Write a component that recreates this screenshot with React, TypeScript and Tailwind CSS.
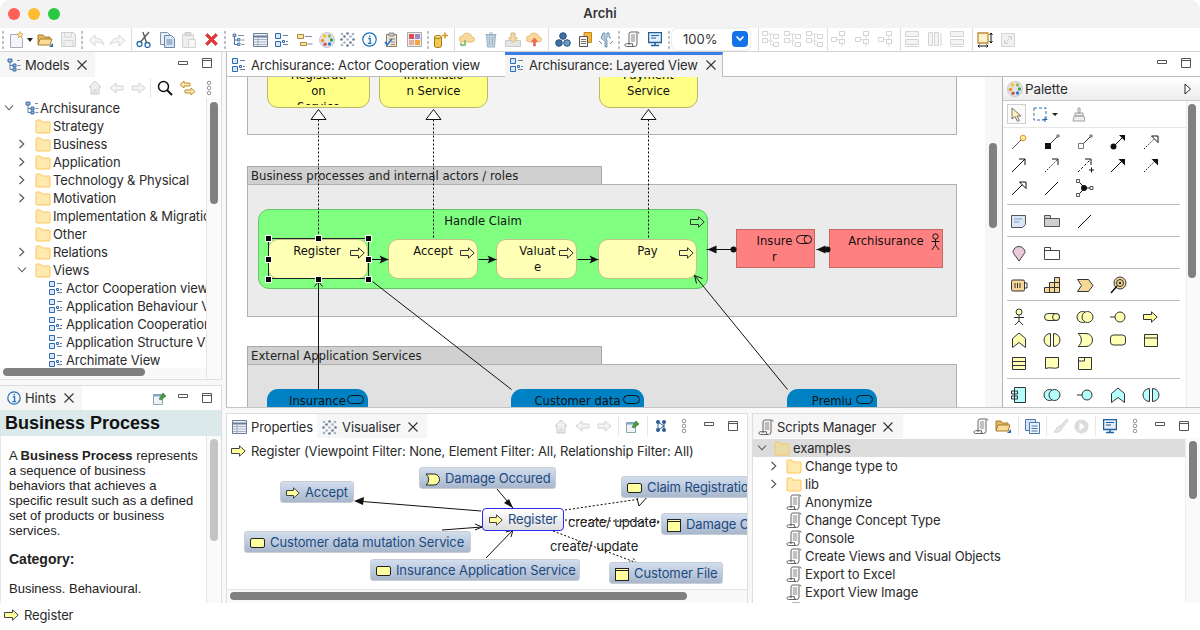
import type { ReactNode } from "react";

const ui = "font-['Inter',sans-serif]";
const dj = "font-['DejaVu_Sans',sans-serif]";

type IconProps = { className?: string; fill?: string; stroke?: string };

const S = ({ w = 16, h = 16, children, className = "" }: { w?: number; h?: number; children: ReactNode; className?: string }) => (
  <svg width={w} height={h} viewBox={`0 0 ${w} ${h}`} fill="none" className={`shrink-0 ${className}`}>
    {children}
  </svg>
);

const Folder = ({ dim = false }: { dim?: boolean }) => (
  <S w={16} h={15}>
    <path d="M1 3.5V2a1 1 0 0 1 1-1h3.5l1.5 2h7a1 1 0 0 1 1 1v9a1 1 0 0 1-1 1H2a1 1 0 0 1-1-1z" fill={dim ? "#eadba8" : "#ffe9ae"} stroke="#fbc65d" />
  </S>
);

const ProcessArrow = ({ fill = "#ffff9e", stroke = "#333", w = 15 }: { fill?: string; stroke?: string; w?: number }) => (
  <S w={w} h={12}>
    <path d={`M.5 3.5H${w - 6.5}V.8L${w - 0.8} 6 ${w - 6.5} 11.2V8.5H.5z`} fill={fill} stroke={stroke} />
  </S>
);

const ModelTree = () => (
  <S w={14} h={14}>
    <path d="M3 3v8.5h3M3 7.5h3" stroke="#5d7ea8" />
    <path d="M1 1h4v3H1zM6 6h3v3H6zM6 10h3v3H6z" fill="#8db4e0" stroke="#3f6ea6" />
    <path d="M10 2.5h3M10.5 7.5h3M10.5 11.5h3" stroke="#7b8ea6" />
  </S>
);

const ViewIcon = () => (
  <S w={14} h={14}>
    <path d="M.5.5h5v5h-5zM.5 8.5h5v5h-5z" fill="#d8e8fa" stroke="#2d6cb5" />
    <path d="M7.5 7.5h2v2h-2z" fill="#d8e8fa" stroke="#2d6cb5" />
    <path d="M8 2.5h5M8 11.5h5M11 8.5h2" stroke="#6b7f96" />
  </S>
);

const ScriptIcon = ({ className = "" }: { className?: string }) => (
  <S w={16} h={17} className={className}>
    <path d="M5 14V3a2 2 0 0 1 2-2h6.5a1.5 1.5 0 0 1 1.5 1.5M13 1.5V13a2.5 2.5 0 0 1-2.5 2.5H2.5A1.5 1.5 0 0 1 1 14c0-.8.7-1.3 1.5-1.3H8.5V14a1.5 1.5 0 0 0 1.5 1.5" stroke="#555" strokeWidth=".9" />
    <path d="M6.8 4h4.5M6.8 6h4.5M6.8 8h4.5M6.8 10h4.5" stroke="#777" strokeWidth=".9" />
  </S>
);

const ChevRight = () => (
  <S w={8} h={10}>
    <path d="M1.5 1 5.8 5l-4.3 4" stroke="#555" strokeWidth="1.1" />
  </S>
);

const ChevDown = () => (
  <S w={10} h={8}>
    <path d="M1 1.5 5 5.8l4-4.3" stroke="#555" strokeWidth="1.1" />
  </S>
);

const Close = () => (
  <S w={12} h={12}>
    <path d="M1.5 1.5l9 9M10.5 1.5l-9 9" stroke="#333" strokeWidth="1.1" />
  </S>
);

const Minimize = () => (
  <S w={10} h={5}>
    <path d="M.5.5h9v3h-9z" stroke="#555" />
  </S>
);

const Maximize = () => (
  <S w={10} h={10}>
    <path d="M.5.5h9v9h-9zM.5 2.5h9" stroke="#555" />
  </S>
);

const ViewMenu = () => (
  <S w={6} h={16}>
    <circle cx="3" cy="3" r="1.8" stroke="#8a8a8a" strokeWidth=".9" />
    <circle cx="3" cy="8" r="1.8" stroke="#8a8a8a" strokeWidth=".9" />
    <circle cx="3" cy="13" r="1.8" stroke="#8a8a8a" strokeWidth=".9" />
  </S>
);

const Home = () => (
  <S w={14} h={15}>
    <path d="M7 1 1 7h2v7h8V7h2zM6 14v-4h2v4" fill="#eee" stroke="#ccc" />
  </S>
);

const NavArrow = ({ left }: { left?: boolean }) => (
  <S w={15} h={12} className={left ? "rotate-180" : ""}>
    <path d="M1 4h7V1l6 5-6 5V8H1z" fill="#f4f4f4" stroke="#d2d2d2" />
  </S>
);

const Pin = () => (
  <S w={14} h={14}>
    <path d="M.5 3.5h9v10h-9z" fill="#eef3f9" stroke="#8aa" />
    <path d="M.5 3.5h9v2h-9z" fill="#7da5cf" />
    <path d="M6 8l4-6 3 3-5 4z" fill="#4d9b3f" stroke="#2f7a2b" strokeWidth=".6" />
  </S>
);

const Grip = () => (
  <div className="flex w-[5px] shrink-0 flex-col items-center gap-[2px]">
    {[0, 1, 2, 3].map((i) => (
      <span key={i} className="h-[3px] w-[2px] bg-[#c4c4c4]" />
    ))}
  </div>
);

const Sep = () => <span className="h-[23px] w-px shrink-0 bg-[#dcdcdc]" />;

// toolbar glyphs
const T = {
  newDoc: (
    <div className="flex items-center">
      <S w={16} h={18}>
        <path d="M1.5 3.5h8l4 4v9h-12z" fill="#f2f4f8" stroke="#aab" />
        <path d="M11 .5l1 2 2 .5-1.5 1.5.3 2-1.8-1-1.8 1 .3-2L8.5 3l2-.5z" fill="#ffe9a0" stroke="#c99a30" strokeWidth=".7" />
      </S>
      <span className="ml-[2px] h-0 w-0 border-x-[3px] border-t-[4px] border-x-transparent border-t-[#222]" />
    </div>
  ),
  open: (
    <S w={17} h={16}>
      <path d="M1 3h5l1.5 2H13v7H1z" fill="#e8b860" stroke="#a97b2a" />
      <path d="M1 13l2-6h12l-2 6z" fill="#f7dc9a" stroke="#a97b2a" />
      <path d="M12 15l4-4v4z" fill="#2d6cb5" />
    </S>
  ),
  save: (
    <S w={15} h={15}>
      <path d="M.5.5h12l2 2v12H.5z" fill="#f0f0f0" stroke="#cfcfcf" />
      <path d="M3.5 1v4h7V1M3 14V8.5h9V14" stroke="#d6d6d6" />
    </S>
  ),
  undo: (
    <S w={17} h={14}>
      <path d="M1 7.5 7 2v3c5 0 8 2.5 9 7-2-2.5-5-3.5-9-3v4z" fill="#f5f5f5" stroke="#d8d8d8" />
    </S>
  ),
  redo: (
    <S w={17} h={14}>
      <path d="M16 7.5 10 2v3c-5 0-8 2.5-9 7 2-2.5 5-3.5 9-3v4z" fill="#f5f5f5" stroke="#d8d8d8" />
    </S>
  ),
  cut: (
    <S w={16} h={17}>
      <circle cx="3.5" cy="13" r="2.5" stroke="#2d6cb5" strokeWidth="1.3" />
      <circle cx="11.5" cy="14" r="2.5" stroke="#2d6cb5" strokeWidth="1.3" />
      <path d="M4.5 11 13 1M10.5 12 7 1" stroke="#555" strokeWidth="1.3" />
    </S>
  ),
  copy: (
    <S w={15} h={16}>
      <path d="M.5.5h7l3 3v9h-10z" fill="#eaf0f8" stroke="#7f93ad" />
      <path d="M4.5 3.5h7l3 3v9h-10z" fill="#dbe6f5" stroke="#6a86ab" />
      <path d="M6.5 8h6M6.5 10h6M6.5 12h6" stroke="#6a86ab" />
    </S>
  ),
  paste: (
    <S w={14} h={16}>
      <path d="M.5 2.5h11v13H.5z" fill="#eee" stroke="#d4d4d4" />
      <path d="M3 .5h6v3H3z" fill="#ddd" stroke="#ccc" />
      <path d="M6.5 7.5h7v8h-7z" fill="#f6f6f6" stroke="#d4d4d4" />
    </S>
  ),
  del: (
    <S w={15} h={15}>
      <path d="M1.5 3.5 3.5 1.5l4 4 4-4 2 2-4 4 4 4-2 2-4-4-4 4-2-2 4-4z" fill="#e53935" stroke="#c62828" strokeWidth=".6" />
    </S>
  ),
  tree: (
    <S w={13} h={14}>
      <path d="M2.5 3v8.5h3M2.5 7h3" stroke="#4c6c90" />
      <path d="M1 1h3v2.5H1zM5.5 5.5H8V8H5.5zM5.5 10H8v2.5H5.5z" fill="#9fc0e4" stroke="#3f6ea6" strokeWidth=".8" />
      <path d="M6 2.5h6M9.5 7h3M9.5 11.5h3" stroke="#7b8ea6" />
    </S>
  ),
  table: (
    <S w={15} h={14}>
      <path d="M.5.5h14v13H.5z" fill="#eef2f8" stroke="#6a7e9a" />
      <path d="M.5 3.5h14" stroke="#6a7e9a" strokeWidth="2" />
      <path d="M5 4v9M1 6.5h13M1 9h13M1 11.5h13" stroke="#8a9ab0" strokeWidth=".7" />
    </S>
  ),
  props: <ViewIcon />,
  outline: (
    <S w={16} h={14}>
      <path d="M.5 1.5h6v4h-6zM3.5 9.5h6v3h-6z" fill="#fbe7a6" stroke="#a98a3a" />
      <path d="M8 3.5h7M10.5 11h5" stroke="#7b8ea6" />
    </S>
  ),
  palette: (
    <S w={16} h={16}>
      <circle cx="8" cy="8" r="7.5" fill="#e3e3ea" stroke="#c8c8d0" />
      <circle cx="5.5" cy="4" r="1.7" fill="#f5c21b" />
      <circle cx="10.5" cy="4" r="1.7" fill="#9bbb59" />
      <circle cx="3.5" cy="8.5" r="1.7" fill="#f0921c" />
      <circle cx="12.5" cy="8" r="1.7" fill="#3aa14a" />
      <circle cx="6" cy="12.3" r="1.7" fill="#d9534f" />
      <circle cx="10.5" cy="12" r="1.7" fill="#2f7fd1" />
    </S>
  ),
  sparkle: (
    <S w={15} h={15}>
      {[[2, 2], [7.5, 1.5], [13, 2], [4.5, 4.5], [10.5, 4.5], [1.5, 7.5], [7.5, 7.5], [13.5, 7.5], [4.5, 10.5], [10.5, 10.5], [2, 13], [7.5, 13.5], [13, 13]].map(([x, y], i) => (
        <circle key={i} cx={x} cy={y} r="1.3" fill={i % 2 ? "#6a7a8f" : "#a6b4c6"} />
      ))}
    </S>
  ),
  info: (
    <S w={15} h={15}>
      <circle cx="7.5" cy="7.5" r="6.7" fill="#fff" stroke="#1f6fb8" strokeWidth="1.2" />
      <path d="M6.3 6.5h1.8V11M6 11.3h3.5M7.8 3.5V5" stroke="#1f6fb8" strokeWidth="1.3" />
    </S>
  ),
  check: (
    <S w={15} h={16}>
      <path d="M2.5 2.5h10v12h-10z" fill="#f1e7d2" stroke="#8a7a5c" />
      <path d="M5 1h5v3H5z" fill="#ccc" stroke="#888" />
      <path d="M5 7h6M7 10h4M7 12.5h4" stroke="#8a8a8a" />
      <path d="M1 10l2 3 5-6" stroke="#1f6fd8" strokeWidth="1.5" />
    </S>
  ),
  grid: (
    <S w={15} h={15}>
      <path d="M.5.5h14v14H.5z" fill="#eee" stroke="#aaa" />
      <path d="M2 2h5v5H2z" fill="#e04b4b" />
      <path d="M8 2h5v5H8z" fill="#9f8ad0" />
      <path d="M2 8h5v5H2z" fill="#e5b0a0" />
      <path d="M8 8h5v5H8z" fill="#f0a83c" />
    </S>
  ),
  pkgAdd: (
    <S w={16} h={16}>
      <path d="M1.5 5v9c0 2 7 2 7 0V5z" fill="#f5c94a" stroke="#9a7a1e" />
      <ellipse cx="5" cy="5" rx="3.5" ry="1.5" fill="#fde08a" stroke="#9a7a1e" />
      <path d="M12 .5v6M9 3.5h6" stroke="#d59a2a" strokeWidth="1.6" />
    </S>
  ),
  cloudDown: (
    <S w={17} h={15}>
      <path d="M3 10a3 3 0 0 1 .5-6 5 5 0 0 1 9.5 1 2.5 2.5 0 0 1 0 5z" fill="#f9d89a" stroke="#e5c27c" />
      <path d="M6 8v5H2l0-1 2 2" stroke="#7fb86a" strokeWidth="1.6" />
    </S>
  ),
  trash: (
    <S w={12} h={16}>
      <path d="M1.5 3h9l-1 12h-7z" fill="#c2d4e2" stroke="#9bb2c4" />
      <path d="M.5 2.5h11M4 1h4M4.5 5v8M7.5 5v8" stroke="#9bb2c4" />
    </S>
  ),
  inbox: (
    <S w={16} h={15}>
      <path d="M.5 8.5h15v6H.5z" fill="#e5e5e5" stroke="#c9c9c9" />
      <path d="M6 1h4v5h2.5L8 10.5 3.5 6H6z" fill="#f4d8a6" stroke="#d5b47c" />
    </S>
  ),
  cloudUp: (
    <S w={17} h={15}>
      <path d="M3 10a3 3 0 0 1 .5-6 5 5 0 0 1 9.5 1 2.5 2.5 0 0 1 0 5z" fill="#f9d89a" stroke="#e5c27c" />
      <path d="M8.5 6 5.5 9.5h2V14h2V9.5h2z" fill="#f36a5e" stroke="#e3574a" strokeWidth=".6" />
    </S>
  ),
  circles: (
    <S w={16} h={15}>
      <circle cx="8" cy="4" r="3.3" fill="#3b6fa5" stroke="#27527f" />
      <circle cx="4" cy="11" r="3.3" fill="#3b6fa5" stroke="#27527f" />
      <circle cx="12" cy="11" r="3.3" fill="#6f9bc7" stroke="#27527f" />
    </S>
  ),
  docs: (
    <S w={13} h={15}>
      <path d="M5 .5h7.5v10H5z" fill="#f3b73f" stroke="#c08a1f" />
      <path d="M.5 4.5h8v10h-8z" fill="#f5f5f5" stroke="#555" />
      <path d="M2 7.5h5M2 9.5h5M2 11.5h5" stroke="#777" />
    </S>
  ),
  merge: (
    <S w={16} h={16}>
      <path d="M5 1h2v5l2 2v7H7V9L3 6z" fill="#b9cfe6" stroke="#5d82a8" strokeWidth=".8" />
      <path d="M11 1H9v5l-.5.5M13 6l-2-1V1M1 9l3 3M15 9l-3 3" stroke="#5d82a8" />
    </S>
  ),
  monitor: (
    <S w={14} h={15}>
      <path d="M.5.5h13v10H.5z" fill="#e5eef8" stroke="#1f5f9e" strokeWidth="1.4" />
      <path d="M3 3.5h8M3 6h5" stroke="#1f5f9e" />
      <path d="M3 13.5h8M7 11v2" stroke="#1f5f9e" strokeWidth="1.5" />
    </S>
  ),
  alignA: (
    <S w={17} h={17}>
      <path d="M.5.5h5v4h-5zM.5 7.5h5v4h-5zM11.5 3.5h5v4h-5zM11.5 11.5h5v4h-5z" stroke="#d4d4d4" />
      <path d="M6 3h5M6 10h5M8.5 3v11H11" stroke="#dcdcdc" />
    </S>
  ),
  alignB: (
    <S w={17} h={17}>
      <path d="M.5 6.5h5v4h-5zM8.5.5h5v4h-5zM8.5 8.5h5v4h-5z" stroke="#d4d4d4" />
      <path d="M6 8.5h2M11 5v3M11 13v3" stroke="#dcdcdc" />
    </S>
  ),
  sizeA: (
    <S w={15} h={17}>
      <path d="M.5.5h13v5H.5zM.5 8.5h13v5H.5z" stroke="#d4d4d4" fill="#f4f4f4" />
      <path d="M.5 15.5h13" stroke="#d4d4d4" />
    </S>
  ),
  sizeB: (
    <S w={15} h={15}>
      <path d="M.5.5h4v13h-4zM6.5.5h4v13h-4z" stroke="#d4d4d4" fill="#f4f4f4" />
      <path d="M13 1v13" stroke="#d4d4d4" />
    </S>
  ),
  matchSize: (
    <S w={16} h={16}>
      <path d="M1 1h10v10H1z" fill="#fdf2cf" stroke="#c08a30" strokeWidth="1.3" />
      <path d="M14 1v10M1 14h10" stroke="#111" />
      <path d="M12.5 3 14 1l1.5 2M12.5 9l1.5 2 1.5-2M2.5 12.5 1 14l1.5 1.5M9.500 12.5 11 14l-1.5 1.5" stroke="#111" />
    </S>
  ),
  expand: (
    <S w={14} h={14}>
      <path d="M.5.5h13v13H.5z" fill="#f2f2f2" stroke="#d4d4d4" />
      <path d="M3.5 10.5l7-7M7 3.5h3.5V7M7 10.5H3.5V7" stroke="#d0d0d0" />
    </S>
  ),
};

const Slot = ({ children, className }: { children: ReactNode; className: string }) => (
  <div className={`flex shrink-0 items-center justify-center ${className}`}>{children}</div>
);

const Toolbar = () => (
  <div className="flex h-[24px] shrink-0 items-center border-b border-[#d4d4d4] bg-white">
    <Grip />
    <Slot className="w-[29px] pl-[2px]">{T.newDoc}</Slot>
    <Slot className="w-[23px]">{T.open}</Slot>
    <Slot className="w-[22px]">{T.save}</Slot>
    <Grip />
    <Slot className="w-[24px]">{T.undo}</Slot>
    <Slot className="w-[18px]">{T.redo}</Slot>
    <span className="w-[5px]" />
    <Sep />
    <Slot className="w-[24px]">{T.cut}</Slot>
    <Slot className="w-[22px]">{T.copy}</Slot>
    <Slot className="w-[22px]">{T.paste}</Slot>
    <Slot className="w-[22px]">{T.del}</Slot>
    <Grip />
    <Slot className="w-[23px]">{T.tree}</Slot>
    <Slot className="w-[21px]">{T.table}</Slot>
    <Slot className="w-[22px]">{T.props}</Slot>
    <Slot className="w-[23px]">{T.outline}</Slot>
    <Slot className="w-[21px]">{T.palette}</Slot>
    <Slot className="w-[21px]">{T.sparkle}</Slot>
    <Slot className="w-[22px]">{T.info}</Slot>
    <Slot className="w-[23px]">{T.check}</Slot>
    <Slot className="w-[22px]">{T.grid}</Slot>
    <Grip />
    <Slot className="w-[22px]">{T.pkgAdd}</Slot>
    <span className="w-[2px]" />
    <Sep />
    <Slot className="w-[24px]">{T.cloudDown}</Slot>
    <Slot className="w-[23px]">{T.trash}</Slot>
    <Slot className="w-[21px]">{T.inbox}</Slot>
    <Slot className="w-[23px]">{T.cloudUp}</Slot>
    <span className="w-[2px]" />
    <Sep />
    <span className="w-[3px]" />
    <Slot className="w-[22px]">{T.circles}</Slot>
    <Slot className="w-[22px]">{T.docs}</Slot>
    <Slot className="w-[20px]">{T.merge}</Slot>
    <Grip />
    <Slot className="w-[22px]">
      <ScriptIcon />
    </Slot>
    <Slot className="w-[23px]">{T.monitor}</Slot>
    <Grip />
    <div className="relative ml-px flex h-[21px] w-[78px] shrink-0 items-center rounded-[5px] bg-white shadow-[0_0_2px_rgba(0,0,0,0.25)]">
      <span className={`${ui} ml-[11px] text-[13px] text-[#333]`}>100%</span>
      <span className="absolute right-[2px] top-[2px] flex h-[16px] w-[16px] items-center justify-center rounded-[4px] bg-[#1473e6]">
        <S w={10} h={8}>
          <path d="M1.5 1.5 5 5l3.5-3.5" stroke="#fff" strokeWidth="1.6" />
        </S>
      </span>
    </div>
    <span className="w-[8px]" />
    <Sep />
    <Slot className="w-[22px]">{T.alignA}</Slot>
    <Slot className="w-[22px]">{T.alignA}</Slot>
    <Slot className="w-[22px]">{T.alignA}</Slot>
    <span className="w-[2px]" />
    <Sep />
    <Slot className="w-[23px]">{T.alignB}</Slot>
    <Slot className="w-[24px]">{T.alignB}</Slot>
    <Slot className="w-[23px]">{T.alignB}</Slot>
    <span className="w-[2px]" />
    <Sep />
    <Slot className="w-[23px]">{T.sizeA}</Slot>
    <Slot className="w-[22px]">{T.sizeB}</Slot>
    <Slot className="w-[22px]">{T.sizeA}</Slot>
    <span className="w-[4px]" />
    <Sep />
    <Slot className="w-[23px]">{T.matchSize}</Slot>
    <Slot className="w-[23px]">{T.expand}</Slot>
  </div>
);

const TabLabel = ({ children, className = "" }: { children: ReactNode; className?: string }) => (
  <span className={`${ui} whitespace-nowrap text-[13px] leading-none tracking-[-0.12px] text-[#2b2b2b] ${className}`}>{children}</span>
);

const Row = ({ indent, chev, icon, label, selected }: { indent: string; chev?: "r" | "d"; icon: ReactNode; label: string; selected?: boolean }) => (
  <div className={`flex h-[18px] items-center whitespace-nowrap ${selected ? "bg-[#dcdcdc]" : ""}`}>
    <div className={`relative flex h-full shrink-0 items-center ${indent}`}>
      {chev && <span className="absolute right-[26px] flex w-[10px] justify-center">{chev === "r" ? <ChevRight /> : <ChevDown />}</span>}
      <span className="flex w-[18px] justify-start">{icon}</span>
    </div>
    <span className={`${ui} text-[13px] leading-none tracking-[-0.12px] text-[#2b2b2b]`}>{label}</span>
  </div>
);

const ModelsPanel = () => (
  <div className="flex h-[328px] flex-col border-b border-r border-[#dedede] bg-white">
    <div className="flex h-[25px] shrink-0 items-center">
      <div className="flex h-full w-[95px] items-center bg-[#f6f6f6] pl-[7px] pt-px">
        <ModelTree />
        <TabLabel className="ml-[4px]">Models</TabLabel>
        <span className="ml-[7px]">
          <Close />
        </span>
      </div>
      <div className="flex flex-1 items-center justify-end gap-[14px] pb-[3px] pr-[9px]">
        <Minimize />
        <Maximize />
      </div>
    </div>
    <div className="flex h-[21px] shrink-0 items-center justify-end pr-[9px]">
      <Home />
      <span className="ml-[7px]">
        <NavArrow left />
      </span>
      <span className="ml-[7px]">
        <NavArrow />
      </span>
      <span className="ml-[4px] mr-[6px] h-[20px] w-px bg-[#e2e2e2]" />
      <S w={16} h={16}>
        <circle cx="6.5" cy="6.5" r="5" stroke="#111" strokeWidth="1.5" />
        <path d="M10 10l5 5" stroke="#111" strokeWidth="2" />
      </S>
      <span className="ml-[6px]">
        <S w={17} h={16}>
          <path d="M1 4.5 5 1v2h6v3H5v2zM16 11.5 12 15v-2H6v-3h6V8z" fill="#fbe8b8" stroke="#c4912f" />
        </S>
      </span>
      <span className="ml-[10px]">
        <ViewMenu />
      </span>
    </div>
    <div className="flex min-h-0 flex-1">
      <div className="min-w-0 flex-1 overflow-hidden">
        <div className="h-[270px] overflow-hidden pt-[1px]">
          <Row indent="w-[40px] pl-[25px]" chev="d" icon={<ModelTree />} label="Archisurance" />
          {[
            ["Strategy", false],
            ["Business", true],
            ["Application", true],
            ["Technology & Physical", true],
            ["Motivation", true],
            ["Implementation & Migration", false],
            ["Other", false],
            ["Relations", true],
          ].map(([n, c]) => (
            <Row key={n as string} indent="w-[53px] pl-[35px]" chev={c ? "r" : undefined} icon={<Folder />} label={n as string} />
          ))}
          <Row indent="w-[53px] pl-[35px]" chev="d" icon={<Folder />} label="Views" />
          {["Actor Cooperation view", "Application Behaviour View", "Application Cooperation", "Application Structure View", "Archimate View"].map((n) => (
            <Row key={n} indent="w-[66px] pl-[49px]" icon={<ViewIcon />} label={n} />
          ))}
        </div>
        <div className="h-[10px] bg-[#f9f9f9] pl-[3px]">
          <div className="h-[8px] w-[142px] rounded-full bg-[#808080]" />
        </div>
      </div>
      <div className="w-[15px] shrink-0 border-l border-[#e4e4e4] bg-[#fafafa] pl-[3px] pt-[4px]">
        <div className="h-[102px] w-[8px] rounded-full bg-[#808080]" />
      </div>
    </div>
  </div>
);

const HintsPanel = () => (
  <div className="mt-[5px] flex h-[218px] flex-col border-r border-t border-[#dedede] bg-white">
    <div className="flex h-[24px] shrink-0 items-center">
      <div className="flex h-full w-[82px] items-center bg-[#f6f6f6] pl-[7px]">
        <S w={14} h={14}>
          <circle cx="7" cy="7" r="6.2" stroke="#1f6fb8" strokeWidth="1.2" />
          <path d="M5.8 6h1.8v4.5M5.5 10.700h3.400M7.300 3v1.5" stroke="#1f6fb8" strokeWidth="1.3" />
        </S>
        <TabLabel className="ml-[4px]">Hints</TabLabel>
        <span className="ml-[7px]">
          <Close />
        </span>
      </div>
      <div className="flex flex-1 items-center justify-end pr-[9px]">
        <Pin />
        <span className="mb-[3px] ml-[11px]">
          <Minimize />
        </span>
        <span className="mb-[1px] ml-[14px]">
          <Maximize />
        </span>
      </div>
    </div>
    <div className="flex h-[26px] shrink-0 items-center bg-[#dce9ea] pl-[5px] font-['Liberation_Sans',sans-serif] text-[18px] font-bold text-[#111]">
      Business Process
    </div>
    <div className="flex min-h-0 flex-1 border-l border-[#e8e8e8]">
      <div className="min-w-0 flex-1 overflow-hidden pl-[8px] pr-[8px] pt-[12px] font-['Liberation_Sans',sans-serif] text-[13px] leading-[15px] text-[#222]">
        <p>
          A <b>Business Process</b> represents a sequence of business behaviors that achieves a specific result such as a defined set of products or business services.
        </p>
        <p className="mt-[14px] text-[14px] font-bold">Category:</p>
        <p className="mt-[14px]">Business. Behavioural.</p>
      </div>
      <div className="w-[15px] shrink-0 border-l border-[#e4e4e4] bg-[#fafafa] pl-[3px] pt-[3px]">
        <div className="h-[102px] w-[8px] rounded-full bg-[#c4c4c4]" />
      </div>
    </div>
  </div>
);

// diagram elements
const dNode = `${dj} absolute text-center text-[11.6px] leading-[16px] text-[#111]`;
const groupTab = `${dj} absolute left-[21px] flex h-[19px] w-[355px] items-center border border-b-0 border-[#a8a8a8] bg-[#d0d0d0] pl-[3px] pt-[2px] text-[11.7px] text-[#222]`;

const Handles = () => (
  <>
    <div className="absolute left-[42px] top-[161px] h-[41px] w-[101px] border border-[#222]" />
    {[
      "left-[39px] top-[158px]",
      "left-[89px] top-[158px]",
      "left-[139px] top-[158px]",
      "left-[39px] top-[179px]",
      "left-[139px] top-[179px]",
      "left-[39px] top-[199px]",
      "left-[89px] top-[199px]",
      "left-[139px] top-[199px]",
    ].map((c) => (
      <span key={c} className={`absolute h-[7px] w-[7px] border border-white bg-black ${c}`} />
    ))}
  </>
);

const BizProc = ({ className, children }: { className: string; children: ReactNode }) => (
  <div className={`${dNode} h-[40px] rounded-[10px] border border-[#c2c08c] bg-[#ffffb5] ${className}`}>
    {children}
    <span className="absolute right-[2px] top-[7px]">
      <ProcessArrow w={15} fill="#ffffb5" stroke="#333" />
    </span>
  </div>
);

const AppService = ({ className, label }: { className: string; label: string }) => (
  <div className={`${dNode} h-[40px] rounded-t-[11px] bg-[#0081c4] pt-[4px] ${className}`}>
    <span>{label}</span>
    <span className="absolute right-[4px] top-[6px] h-[9px] w-[17px] rounded-full border border-[#111]" />
  </div>
);

const Canvas = () => (
  <div className="relative min-w-0 flex-1 overflow-hidden bg-white shadow-[inset_1px_0_0_#bdbdbd]">
    {/* top group */}
    <div className="absolute left-[21px] top-[-20px] h-[78px] w-[710px] border border-[#b0b0b0] bg-[#f3f3f3]" />
    <div className={`${dNode} left-[41px] top-[-20px] h-[51px] w-[103px] rounded-b-[11px] border border-[#b8b86a] bg-[#ffff85]`}>
      <div className="mt-[9px] h-[38px] overflow-hidden">
        Registrati
        <br />
        on
        <br />
        Service
      </div>
    </div>
    <div className={`${dNode} left-[153px] top-[-20px] h-[51px] w-[109px] rounded-b-[11px] border border-[#b8b86a] bg-[#ffff85]`}>
      <div className="mt-[9px]">
        Informatio
        <br />n Service
      </div>
    </div>
    <div className={`${dNode} left-[373px] top-[-20px] h-[51px] w-[99px] rounded-b-[11px] border border-[#b8b86a] bg-[#ffff85]`}>
      <div className="mt-[9px]">
        Payment
        <br />
        Service
      </div>
    </div>
    {/* business processes group */}
    <div className={`${groupTab} top-[89px]`}>Business processes and internal actors / roles</div>
    <div className="absolute left-[21px] top-[107px] h-[133px] w-[710px] border border-[#b0b0b0] bg-[#ebebeb]" />
    <div className={`${dNode} left-[32px] top-[132px] h-[80px] w-[450px] rounded-[11px] border border-[#68c468] bg-[#80ff80] pt-[3px]`}>
      Handle Claim
      <span className="absolute right-[2px] top-[6px]">
        <ProcessArrow w={15} fill="#80ff80" stroke="#333" />
      </span>
    </div>
    <BizProc className="left-[42px] top-[162px] w-[100px]">
      <div className="pr-[2px] pt-[3px]">Register</div>
    </BizProc>
    <BizProc className="left-[162px] top-[162px] w-[90px]">
      <div className="pt-[3px]">Accept</div>
    </BizProc>
    <BizProc className="left-[270px] top-[162px] w-[81px]">
      <div className="pl-[2px] pt-[3px]">
        Valuat
        <br />e
      </div>
    </BizProc>
    <BizProc className="left-[372px] top-[162px] w-[99px]">
      <div className="pt-[3px]">Pay</div>
    </BizProc>
    <div className={`${dNode} left-[510px] top-[152px] h-[39px] w-[79px] border border-[#c26a6a] bg-[#ff8080] pt-[3px]`}>
      <div className="pr-[2px]">
        Insure
        <br />r
      </div>
      <S w={17} h={10} className="absolute right-[1px] top-[5px]">
        <rect x=".5" y=".5" width="15" height="8" rx="4" stroke="#111" />
        <path d="M12 .5a4 4 0 0 0 0 8" stroke="#111" />
      </S>
    </div>
    <div className={`${dNode} left-[603px] top-[152px] h-[39px] w-[114px] border border-[#c26a6a] bg-[#ff8080] pt-[3px]`}>
      Archisurance
      <S w={9} h={18} className="absolute right-[2px] top-[3px]">
        <circle cx="4.5" cy="3.5" r="2.7" stroke="#111" />
        <path d="M4.5 6v6M.5 8.5h8M4.5 12 .8 17M4.5 12l3.7 5" stroke="#111" />
      </S>
    </div>
    {/* external app services group */}
    <div className={`${groupTab} top-[269px]`}>External Application Services</div>
    <div className="absolute left-[21px] top-[287px] h-[80px] w-[710px] border border-[#b0b0b0] bg-[#e1e1e1]" />
    <AppService className="left-[41px] top-[312px] w-[101px]" label="Insurance" />
    <AppService className="left-[285px] top-[312px] w-[133px]" label="Customer data" />
    <AppService className="left-[561px] top-[312px] w-[90px]" label="Premiu" />
    {/* connections */}
    <svg className="absolute left-0 top-0" width="776" height="331" fill="none">
      <g transform="translate(.5 .5)">
        <path d="M92 42v120M207 42v120M422 42v120" stroke="#000" strokeDasharray="2 2" />
        <path d="M92 32l7.5 10h-15zM207 32l7.5 10h-15zM422 32l7.5 10h-15z" fill="#fff" stroke="#111" />
        <path d="M142 182h20M252 182h18M351 182h21" stroke="#111" />
        <path d="M162 182l-9-4 2 4-2 4zM270 182l-9-4 2 4-2 4zM372 182l-9-4 2 4-2 4z" fill="#111" />
        <circle cx="507" cy="172" r="3" fill="#111" />
        <path d="M507 172h-27" stroke="#111" />
        <path d="M481 172l9-4v8z" fill="#111" />
        <circle cx="601" cy="172" r="3" fill="#111" />
        <path d="M601 172h-11" stroke="#111" />
        <path d="M590 172l9-4v8z" fill="#111" />
        <path d="M92 312V204M88 209l4-5 4 5" stroke="#111" />
        <path d="M285 312 146 204" stroke="#111" />
        <path d="M561 312 468 198M470 206l-2-8 8 3" stroke="#111" />
      </g>
    </svg>
    <Handles />
  </div>
);

const Rel = ({ d, dash, head }: { d?: string; dash?: boolean; head?: "open" | "fill" | "tri" | "none" }) => (
  <S w={18} h={18}>
    <path d={d ?? "M2 16 15 3"} stroke="#111" strokeDasharray={dash ? "1.5 1.5" : undefined} />
    {head === "open" && <path d="M9 3h6v6" stroke="#111" />}
    {head === "fill" && <path d="M9.5 3H16v6.5z" fill="#111" />}
    {head === "tri" && <path d="M9.5 3H16v6.5z" fill="#fff" stroke="#111" />}
  </S>
);

const El = ({ children }: { children: ReactNode }) => (
  <S w={18} h={18}>
    {children}
  </S>
);

const BY = "#ffffb5";
const BC = "#b5ffff";
const PAL: ReactNode[][] = [
  [
    <S w={18} h={18} key="m">
      <path d="M2 16 12 6" stroke="#555" />
      <circle cx="13" cy="5" r="2.8" fill="#ffe9a0" stroke="#d59a2a" />
    </S>,
    <S w={18} h={18} key="a">
      <path d="M6 12 15 3" stroke="#333" />
      <path d="M2 10h6v6H2z" fill="#111" />
      <circle cx="15" cy="3" r="1.8" fill="#888" />
    </S>,
    <S w={18} h={18} key="b">
      <path d="M7 11l8-8" stroke="#333" />
      <path d="M2.5 10.5h5v5h-5z" fill="#fff" stroke="#777" />
      <circle cx="15" cy="3" r="1.8" fill="#888" />
    </S>,
    <S w={18} h={18} key="c">
      <path d="M5 13 14 4" stroke="#111" />
      <circle cx="4.5" cy="13.5" r="3" fill="#111" />
      <path d="M10 2h6v6z" fill="#111" />
    </S>,
    <Rel key="d" dash head="tri" />,
  ],
  [
    <Rel key="a" head="open" />,
    <Rel key="b" dash head="open" />,
    <S w={18} h={18} key="c">
      <path d="M2 16 14 4" stroke="#111" strokeDasharray="2.5 2" />
      <path d="M9 3h6v6M13 14h5M15.5 11.5v5" stroke="#111" />
    </S>,
    <Rel key="d" head="fill" />,
    <Rel key="e" dash head="fill" />,
  ],
  [
    <Rel key="a" head="tri" />,
    <Rel key="b" />,
    <S w={18} h={18} key="c">
      <path d="M2 2l7 7-7 7M9 9h7" stroke="#111" />
      <circle cx="8" cy="9" r="3" fill="#111" />
      <path d="M.5.5h3v3h-3zM.5 14.5h3v3h-3zM14 7.5h3v3h-3z" fill="#fff" stroke="#555" />
    </S>,
  ],
];

const Section = ({ children }: { children: ReactNode }) => (
  <div className="ml-[4px] mr-[6px] border-b border-[#bcbcbc] py-[4px]">
    <div className="ml-[-5px] grid auto-rows-[23px] grid-cols-[repeat(5,33px)] items-center justify-items-center">{children}</div>
  </div>
);

const Palette = () => (
  <div className="flex w-[198px] shrink-0 flex-col border-l border-[#b4b4b4] bg-white">
    <div className="flex h-[24px] shrink-0 items-center border-b border-[#c8c8c8] bg-gradient-to-b from-white to-[#ececec] pl-[4px]">
      {T.palette}
      <span className={`${ui} ml-[2px] mt-[2px] text-[13.5px] leading-none tracking-[-0.12px] text-[#2b2b2b]`}>Palette</span>
      <S w={8} h={12} className="ml-auto mr-[8px]">
        <path d="M1 1l5.5 5L1 11z" fill="#fff" stroke="#222" />
      </S>
    </div>
    <div className="flex min-h-0 flex-1">
      <div className="w-[183px] shrink-0 overflow-hidden">
        <div className="flex h-[27px] items-center border-b border-[#e6e6e6] pl-[4px]">
          <span className="flex h-[20px] w-[19px] items-center justify-center border border-[#d0d0d0] bg-[#fafafa]">
            <S w={12} h={15}>
              <path d="M1 1v11l3-2.500 2.500 5 2-1L6 9h4z" fill="#fff2b8" stroke="#555" strokeWidth=".8" />
            </S>
          </span>
          <span className="ml-[7px]">
            <S w={16} h={15}>
              <path d="M1 1h12v12H1z" stroke="#2d6cb5" strokeDasharray="3 2" />
              <path d="M12 10v5M9.5 12.5h5" stroke="#2d6cb5" />
            </S>
          </span>
          <span className="ml-[3px] h-0 w-0 border-x-[3px] border-t-[3px] border-x-transparent border-t-[#222]" />
          <span className="ml-[14px]">
            <S w={13} h={15}>
              <path d="M6 1h2v5H6zM3 6h8v3H3zM2 9h10l1 5H1z" fill="#eee" stroke="#a2a2a2" />
            </S>
          </span>
        </div>
        <div className="ml-[4px] mr-[6px] border-b border-[#bcbcbc] pb-[5px] pt-[2px]">
          {PAL.map((r, i) => (
            <div key={i} className="ml-[-5px] grid h-[23px] grid-cols-[repeat(5,33px)] items-center justify-items-center">
              {r}
            </div>
          ))}
        </div>
        <Section>
          <El>
            <path d="M1.5 3.5h14v9l-3 3h-11z" fill="#d9e6f5" stroke="#555" />
            <path d="M4 7h8M4 10h5" stroke="#7aa0cf" />
          </El>
          <El>
            <path d="M1.5 3.5h6v3h-6zM1.5 6.5h15v8h-15z" fill="#d0d0d0" stroke="#555" />
          </El>
          <Rel />
        </Section>
        <Section>
          <El>
            <path d="M9 17 3 8.5a6 6 0 1 1 12 0z" fill="#ecc8d8" stroke="#444" />
          </El>
          <El>
            <path d="M1.5 3.5h6v3h-6zM1.5 6.5h15v9h-15z" fill="#fff" stroke="#444" />
          </El>
        </Section>
        <Section>
          <El>
            <rect x="1.5" y="4" width="13" height="11" rx="1.5" fill="#f5d898" stroke="#333" />
            <path d="M14.5 7H17v5h-2.5M5 7v5M7.5 7v5M10 7v5" stroke="#333" />
          </El>
          <El>
            <path d="M1.5 16.5v-5h5v-5h5v-5h5v15zM6.5 11.5v5M11.5 6.5v10M6.5 11.5h10M11.5 6.5h5" fill="#f5d898" stroke="#333" />
          </El>
          <El>
            <path d="M1.5 3.5h11l4.500 6-4.500 6h-11l4-6z" fill="#f5d898" stroke="#333" />
          </El>
          <El>
            <circle cx="11" cy="7" r="6" fill="#f5d898" stroke="#333" />
            <circle cx="11" cy="7" r="3.5" stroke="#333" />
            <circle cx="11" cy="7" r="1.3" fill="#333" />
            <path d="M2 17 8 10" stroke="#111" strokeWidth="1.5" />
          </El>
        </Section>
        <Section>
          <Actor />
          <Role fill={BY} />
          <Collab fill={BY} />
          <Iface fill={BY} />
          <div className="flex w-[18px] justify-center">
            <ProcessArrow w={15} />
          </div>
          <Chev fill={BY} />
          <Split fill={BY} />
          <Event />
          <Svc fill={BY} />
          <Bar1 />
          <Bar2 />
          <Note />
          <Prod />
        </Section>
        <div className="ml-[4px] mr-[6px] py-[4px]">
          <div className="ml-[-5px] grid h-[23px] grid-cols-[repeat(5,33px)] items-center justify-items-center">
            <El>
              <path d="M4.5 1.5h11v15h-11zM1.5 5h6v3h-6zM1.5 10h6v3h-6z" fill={BC} stroke="#333" />
            </El>
            <Collab fill={BC} />
            <Iface fill={BC} />
            <Chev fill={BC} />
            <Split fill={BC} />
          </div>
        </div>
      </div>
      <div className="min-w-0 flex-1 border-l border-[#ededed] bg-[#fafafa] pl-[1px] pt-[3px]">
        <div className="h-[174px] w-[8px] rounded-full bg-[#808080]" />
      </div>
    </div>
  </div>
);

const Actor = () => (
  <El>
    <circle cx="9" cy="4" r="3" fill={BY} stroke="#333" />
    <path d="M9 7v6M4 9.5h10M9 13l-4 4M9 13l4 4" stroke="#333" />
  </El>
);
const Role = ({ fill }: IconProps) => (
  <El>
    <rect x="1.5" y="5.5" width="15" height="7" rx="3.5" fill={fill} stroke="#333" />
    <circle cx="13" cy="9" r="3.5" fill={fill} stroke="#333" />
  </El>
);
const Collab = ({ fill }: IconProps) => (
  <El>
    <circle cx="6.5" cy="9" r="5.5" fill={fill} stroke="#333" />
    <circle cx="11.5" cy="9" r="5.5" fill={fill} stroke="#333" />
  </El>
);
const Iface = ({ fill }: IconProps) => (
  <El>
    <path d="M1 9h5" stroke="#333" />
    <circle cx="11" cy="9" r="5" fill={fill} stroke="#333" />
  </El>
);
const Chev = ({ fill }: IconProps) => (
  <El>
    <path d="M2.5 16.5v-9L9 2l6.5 5.5v9L9 11.5z" fill={fill} stroke="#333" />
  </El>
);
const Split = ({ fill }: IconProps) => (
  <El>
    <path d="M7.5 2.5a6.5 6.5 0 0 0 0 13zM10.5 2.5a6.5 6.5 0 0 1 0 13z" fill={fill} stroke="#333" />
  </El>
);
const Event = () => (
  <El>
    <path d="M2 2.5h8a6.5 6.5 0 0 1 0 13H2a8 8 0 0 0 0-13z" fill={BY} stroke="#333" />
  </El>
);
const Svc = ({ fill }: IconProps) => (
  <El>
    <rect x="1.5" y="4" width="15" height="10" rx="3" fill={fill} stroke="#333" />
  </El>
);
const Bar1 = () => (
  <El>
    <path d="M2.5 3.5h13v12h-13zM2.5 7h13" fill={BY} stroke="#333" />
  </El>
);
const Bar2 = () => (
  <El>
    <path d="M2.5 3.5h13v12h-13zM2.5 7.5h13M2.5 11.5h13" fill={BY} stroke="#333" />
  </El>
);
const Note = () => (
  <El>
    <path d="M2.5 3.5h13v10c-4 2-8-1-13 1z" fill={BY} stroke="#333" />
  </El>
);
const Prod = () => (
  <El>
    <path d="M2.5 3.5h13v12h-13zM2.5 7h6V3.5" fill={BY} stroke="#333" />
  </El>
);

const EditorArea = () => (
  <div className="flex h-[356px] flex-col border-b border-[#c4c4c4] bg-white">
    <div className="flex h-[25px] shrink-0 border-b border-[#bdbdbd]">
      <div className="flex w-[279px] items-center border-l border-[#bdbdbd] pl-[5px] pt-[2px]">
        <ViewIcon />
        <TabLabel className="ml-[5px]">Archisurance: Actor Cooperation view</TabLabel>
      </div>
      <div className="flex h-[25px] w-[218px] items-center border-r border-t-[3px] border-r-[#bdbdbd] border-t-[#3d7ee6] bg-[#f4f4f4] pb-[2px] pl-[5px]">
        <ViewIcon />
        <TabLabel className="ml-[5px]">Archisurance: Layered View</TabLabel>
        <span className="ml-[7px]">
          <Close />
        </span>
      </div>
      <div className="flex flex-1 items-center justify-end gap-[14px] pb-[3px] pr-[9px]">
        <Minimize />
        <Maximize />
      </div>
    </div>
    <div className="flex min-h-0 flex-1">
      <Canvas />
      <div className="w-[17px] shrink-0 bg-[#f7f7f7] pl-[4px] pt-[66px]">
        <div className="h-[85px] w-[8px] rounded-full bg-[#808080]" />
      </div>
      <Palette />
    </div>
  </div>
);

const GNode = ({ className, icon, label }: { className: string; icon: ReactNode; label: string }) => (
  <div className={`absolute flex h-[22px] items-center overflow-hidden rounded-[3px] border border-[#c8ccd4] bg-gradient-to-b from-[#d2deee] to-[#a9b7cc] pl-[5px] pt-[2px] ${className}`}>
    {icon}
    <span className={`${ui} ml-[5px] whitespace-nowrap text-[13px] tracking-[-0.12px] text-[#1c4a80]`}>{label}</span>
  </div>
);

const GSvc = () => <span className="h-[10px] w-[15px] shrink-0 rounded-[2px] border border-[#222] bg-[#ffffa0]" />;
const GObj = () => (
  <span className="h-[13px] w-[14px] shrink-0 border border-[#222] bg-[#ffffa0]">
    <span className="block h-[2px] border-b border-[#222]" />
  </span>
);
const GEvent = () => (
  <S w={15} h={13}>
    <path d="M1 1h8a5.5 5.5 0 0 1 0 11H1a7 7 0 0 0 0-11z" fill="#ffffa0" stroke="#222" />
  </S>
);

const VisualiserPanel = () => (
  <div className="flex w-[522px] shrink-0 flex-col border-x border-t border-[#dedede] bg-white">
    <div className="flex h-[24px] shrink-0 items-center">
      <div className="flex h-full items-center pl-[5px] pt-[2px]">
        {T.table}
        <TabLabel className="ml-[4px]">Properties</TabLabel>
      </div>
      <div className="ml-[4px] flex h-full items-center bg-[#f6f6f6] pl-[5px] pt-[2px]">
        {T.sparkle}
        <TabLabel className="ml-[5px]">Visualiser</TabLabel>
        <span className="ml-[7px] mr-[8px]">
          <Close />
        </span>
      </div>
      <div className="flex flex-1 items-center justify-end pr-[9px]">
        <Home />
        <span className="ml-[7px]">
          <NavArrow left />
        </span>
        <span className="ml-[7px]">
          <NavArrow />
        </span>
        <span className="ml-[6px] mr-[7px] h-[20px] w-px bg-[#e8e8e8]" />
        <Pin />
        <span className="mx-[7px] h-[20px] w-px bg-[#e8e8e8]" />
        <S w={12} h={14}>
          <path d="M3 3v8M3 3l6 4-6 4M9 3v8" stroke="#2d5c94" />
          <circle cx="3" cy="3" r="2" fill="#2d5c94" />
          <circle cx="9" cy="3" r="2" fill="#2d5c94" />
          <circle cx="3" cy="11" r="2" fill="#2d5c94" />
          <circle cx="9" cy="11" r="2" fill="#2d5c94" />
        </S>
        <span className="ml-[14px]">
          <ViewMenu />
        </span>
        <span className="mb-[3px] ml-[17px]">
          <Minimize />
        </span>
        <span className="ml-[14px]">
          <Maximize />
        </span>
      </div>
    </div>
    <div className="flex h-[24px] shrink-0 items-center pl-[4px] pt-[2px]">
      <ProcessArrow w={15} stroke="#444" />
      <TabLabel className="ml-[5px]">Register (Viewpoint Filter: None, Element Filter: All, Relationship Filter: All)</TabLabel>
    </div>
    <div className="relative min-h-0 flex-1 overflow-hidden">
      <svg className="absolute left-0 top-0" width="520" height="127" fill="none">
        <path d="M254 49 129 39" stroke="#111" />
        <path d="M127 39l10-4-1 8z" fill="#111" />
        <path d="M270 27 286 46" stroke="#111" />
        <path d="M286 46l-9-5 5-4z" fill="#111" />
        <path d="M215 68 255 65M248 62l7 3-7 3" stroke="#111" />
        <path d="M259 96 286 68M279 70l7-2-2 7" stroke="#111" />
        <path d="M338 48 420 36" stroke="#000" strokeDasharray="2 2" />
        <path d="M422 33l-10 11-2-8z" fill="#fff" stroke="#111" />
        <path d="M338 58 433 60M427 57l6 3-6 3" stroke="#000" strokeDasharray="2 2" />
        <path d="M326 69 410 101M402 100l8 1-5-6" stroke="#000" strokeDasharray="2 2" />
      </svg>
      <GNode className="left-[53px] top-[19px] w-[74px]" icon={<ProcessArrow w={14} stroke="#444" />} label="Accept" />
      <GNode className="left-[192px] top-[5px] w-[137px]" icon={<GEvent />} label="Damage Occured" />
      <GNode className="left-[394px] top-[14px] w-[140px]" icon={<GSvc />} label="Claim Registration" />
      <GNode className="left-[434px] top-[51px] w-[140px]" icon={<GObj />} label="Damage Claim" />
      <div className="absolute left-[255px] top-[46px] flex h-[23px] w-[82px] items-center rounded-[4px] border border-[#2a2af0] bg-gradient-to-b from-white to-[#dedede] pl-[6px]">
        <ProcessArrow w={14} stroke="#444" />
        <span className={`${ui} ml-[5px] text-[13px] tracking-[-0.12px] text-[#1c4a80]`}>Register</span>
      </div>
      <GNode className="left-[17px] top-[69px] w-[227px]" icon={<GSvc />} label="Customer data mutation Service" />
      <GNode className="left-[143px] top-[97px] w-[210px]" icon={<GSvc />} label="Insurance Application Service" />
      <GNode className="left-[382px] top-[100px] w-[114px]" icon={<GObj />} label="Customer File" />
      <span className={`${ui} absolute left-[341px] top-[52px] text-[13px] leading-[16px] tracking-[-0.12px] text-[#222]`}>create/ update</span>
      <span className={`${ui} absolute left-[323px] top-[76px] text-[13px] leading-[16px] tracking-[-0.12px] text-[#222]`}>create/ update</span>
    </div>
    <div className="h-[14px] shrink-0 border-t border-[#e4e4e4] bg-[#f9f9f9] pl-[3px] pt-[2px]">
      <div className="h-[8px] w-[457px] rounded-full bg-[#808080]" />
    </div>
  </div>
);

const ScriptsPanel = () => (
  <div className="ml-[4px] flex min-w-0 flex-1 flex-col border-l border-t border-[#dedede] bg-white">
    <div className="flex h-[24px] shrink-0 items-center">
      <div className="flex h-full w-[150px] items-center bg-[#f6f6f6] pl-[5px] pt-[2px]">
        <ScriptIcon />
        <TabLabel className="ml-[3px]">Scripts Manager</TabLabel>
        <span className="ml-[6px]">
          <Close />
        </span>
      </div>
      <div className="flex flex-1 items-center justify-end pr-[11px]">
        <ScriptIcon />
        <span className="ml-[6px]">{T.open}</span>
        <span className="mx-[6px] h-[20px] w-px bg-[#e8e8e8]" />
        <S w={15} h={15}>
          <path d="M.5.5h10v11H.5z" fill="#d6e4f5" stroke="#4d78ad" />
          <path d="M4.5 3.5h10v11h-10z" fill="#eaf2fb" stroke="#4d78ad" />
          <path d="M6.5 7h6M6.5 9.5h6M6.5 12h6" stroke="#4d78ad" />
        </S>
        <span className="mx-[6px] h-[20px] w-px bg-[#e8e8e8]" />
        <S w={16} h={16}>
          <path d="M14 1 7 8l2 2 6-7zM7 8c-3 0-3 3-6 6 3 1 7 0 8-4" fill="#e5e5e5" stroke="#d4d4d4" />
        </S>
        <span className="ml-[5px]">
          <S w={15} h={15}>
            <circle cx="7.5" cy="7.5" r="7" fill="#dcdcdc" />
            <path d="M5.5 3.5l5.5 4-5.5 4z" fill="#fff" />
          </S>
        </span>
        <span className="ml-[6px] mr-[7px] h-[20px] w-px bg-[#e8e8e8]" />
        {T.monitor}
        <span className="ml-[15px]">
          <ViewMenu />
        </span>
        <span className="mb-[3px] ml-[17px]">
          <Minimize />
        </span>
        <span className="ml-[14px]">
          <Maximize />
        </span>
      </div>
    </div>
    <div className="flex min-h-0 flex-1">
      <div className="w-[432px] shrink-0 overflow-hidden pt-[1px]">
        <Row indent="w-[40px] pl-[21px]" chev="d" icon={<Folder dim />} label="examples" selected />
        <Row indent="w-[52px] pl-[33px]" chev="r" icon={<Folder />} label="Change type to" />
        <Row indent="w-[52px] pl-[33px]" chev="r" icon={<Folder />} label="lib" />
        {["Anonymize", "Change Concept Type", "Console", "Create Views and Visual Objects", "Export to Excel", "Export View Image", "Export"].map((n) => (
          <Row key={n} indent="w-[52px] pl-[33px]" icon={<ScriptIcon />} label={n} />
        ))}
      </div>
      <div className="min-w-0 flex-1 border-l border-[#ededed] bg-[#fafafa] pl-[3px] pt-[3px]">
        <div className="h-[58px] w-[8px] rounded-full bg-[#808080]" />
      </div>
    </div>
  </div>
);

export default function App() {
  return (
    <div className="flex h-[630px] w-[1200px] flex-col overflow-hidden bg-white">
      <div className="relative flex h-[28px] shrink-0 items-center justify-center rounded-t-[10px] bg-[#f3f3f3]">
        <div className="absolute left-[8px] flex gap-[8px]">
          <span className="h-[12px] w-[12px] rounded-full bg-[#ff5f57]" />
          <span className="h-[12px] w-[12px] rounded-full bg-[#febc2e]" />
          <span className="h-[12px] w-[12px] rounded-full bg-[#28c840]" />
        </div>
        <span className={`${ui} text-[13px] font-semibold text-[#333]`}>Archi</span>
      </div>
      <Toolbar />
      <div className="flex h-[551px] shrink-0 bg-[#f8f8f8]">
        <div className="flex w-[222px] shrink-0 flex-col">
          <ModelsPanel />
          <HintsPanel />
        </div>
        <div className="ml-[4px] flex min-w-0 flex-1 flex-col">
          <EditorArea />
          <div className="mt-[5px] flex min-h-0 flex-1">
            <VisualiserPanel />
            <ScriptsPanel />
          </div>
        </div>
      </div>
      <div className="flex h-[27px] shrink-0 items-center bg-white pb-[3px] pl-[4px]">
        <ProcessArrow w={15} stroke="#444" />
        <TabLabel className="ml-[5px]">Register</TabLabel>
      </div>
    </div>
  );
}
